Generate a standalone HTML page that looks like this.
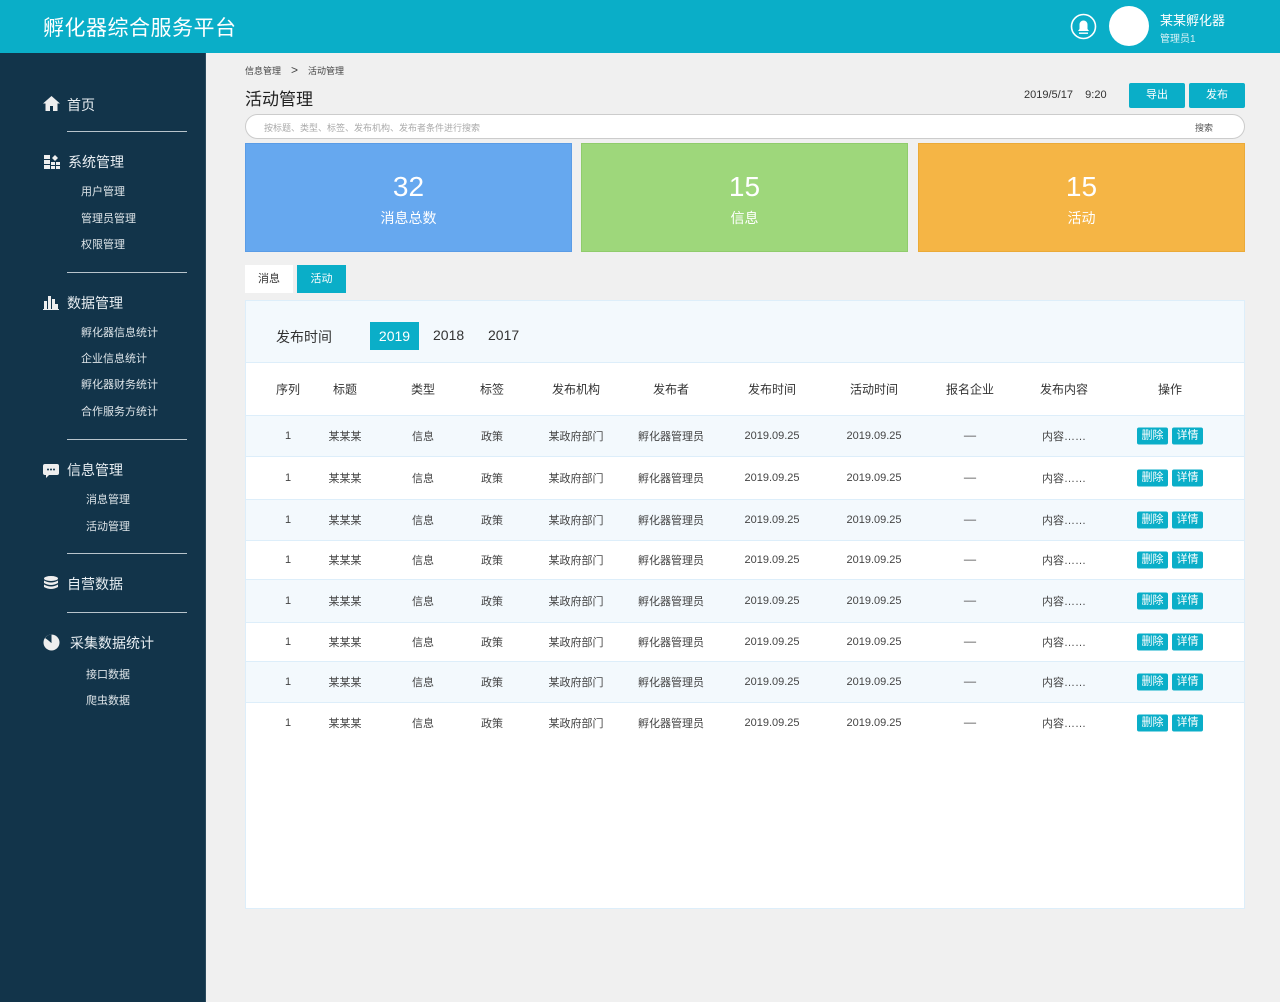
<!DOCTYPE html>
<html><head><meta charset="utf-8">
<style>
*{margin:0;padding:0;box-sizing:border-box}
body{width:1280px;height:1002px;position:relative;background:#f0f0f0;font-family:"Liberation Sans","Noto Sans CJK SC",sans-serif;overflow:hidden;color:#333}
.a{position:absolute}
#hd{left:0;top:0;width:1280px;height:53px;background:#0aaec8}
#sb{left:0;top:53px;width:206px;height:949px;background:#12344a;border-right:1px solid #2a4a5e}
.sl{position:absolute;left:67px;width:120px;height:1px;background:#b8c4cc}
.m{position:absolute;color:#e8eef2;font-size:14px}
.s{position:absolute;color:#dde4e8;font-size:11px}
.card{position:absolute;top:143px;width:327px;height:109px;color:#fff;text-align:center}
.card .n{font-size:28px;margin-top:26px;line-height:34px}
.card .t{font-size:14px;margin-top:4px}
.btn{position:absolute;background:#0aaec8;color:#fff;font-size:11px;text-align:center;border-radius:2px}
.row{position:absolute;left:246px;width:998px;border-top:1px solid #ddeefa}
.row span{position:absolute;width:120px;margin-left:-60px;text-align:center;font-size:11px;color:#444;top:50%;transform:translateY(-50%)}
.hrow span{font-size:12px;color:#333}
.row b{position:absolute;top:50%;transform:translateY(-50%);background:#0aaec8;color:#fff;font-weight:normal;font-size:11px;width:31px;height:17px;line-height:17px;text-align:center;border-radius:2px}
.alt{background:#f3f9fd}
</style></head><body>
<div id="hd" class="a">
 <div class="a" style="left:43px;top:12px;color:#fff;font-size:21px;letter-spacing:0.5px">孵化器综合服务平台</div>
 <svg class="a" style="left:1070px;top:13px" width="27" height="27" viewBox="0 0 27 27"><circle cx="13.5" cy="13.5" r="12" fill="none" stroke="#fff" stroke-width="1.6"/><path d="M8 18h11l-1.5-2v-4.5a4 4 0 0 0-8 0V16z" fill="#fff"/><rect x="9" y="19.5" width="9" height="1.4" fill="#fff"/></svg>
 <div class="a" style="left:1109px;top:6px;width:40px;height:40px;border-radius:50%;background:#fff"></div>
 <div class="a" style="left:1160px;top:10px;color:#fff;font-size:13px">某某孵化器</div>
 <div class="a" style="left:1160px;top:30px;color:#d9f2f6;font-size:10px">管理员1</div>
</div>
<div id="sb" class="a"></div>
<svg class="a" style="left:43px;top:96px" width="17" height="15" viewBox="0 0 17 15"><path d="M8.5 0L0 7.5h2.5V15h4.5v-5h3v5h4.5V7.5H17z" fill="#eee"/></svg>
<div class="m" style="left:67px;top:95px">首页</div>
<div class="sl" style="top:131px"></div>
<svg class="a" style="left:44px;top:155px" width="16" height="14" viewBox="0 0 16 14"><rect x="0" y="0" width="6" height="4" fill="#eee"/><rect x="0" y="5" width="6" height="4" fill="#eee"/><rect x="0" y="10" width="6" height="4" fill="#eee"/><path d="M11 0l3 3-3 3-3-3z" fill="#eee"/><rect x="7" y="7" width="4" height="3" fill="#eee"/><rect x="12" y="7" width="4" height="3" fill="#eee"/><rect x="7" y="11" width="4" height="3" fill="#eee"/><rect x="12" y="11" width="4" height="3" fill="#eee"/></svg>
<div class="m" style="left:68px;top:152px">系统管理</div>
<div class="s" style="left:81px;top:183px">用户管理</div>
<div class="s" style="left:81px;top:210px">管理员管理</div>
<div class="s" style="left:81px;top:236px">权限管理</div>
<div class="sl" style="top:272px"></div>
<svg class="a" style="left:43px;top:295px" width="16" height="15" viewBox="0 0 16 15"><rect x="1" y="6" width="3" height="8" fill="#eee"/><rect x="5" y="1" width="3" height="13" fill="#eee"/><rect x="9" y="4" width="3" height="10" fill="#eee"/><rect x="12" y="9" width="3" height="5" fill="#eee"/><rect x="0" y="14" width="16" height="1" fill="#eee"/></svg>
<div class="m" style="left:67px;top:293px">数据管理</div>
<div class="s" style="left:81px;top:324px">孵化器信息统计</div>
<div class="s" style="left:81px;top:350px">企业信息统计</div>
<div class="s" style="left:81px;top:376px">孵化器财务统计</div>
<div class="s" style="left:81px;top:403px">合作服务方统计</div>
<div class="sl" style="top:439px"></div>
<svg class="a" style="left:43px;top:464px" width="16" height="15" viewBox="0 0 16 15"><path d="M2 0h12a2 2 0 0 1 2 2v7a2 2 0 0 1-2 2H6l-3 3v-3H2a2 2 0 0 1-2-2V2a2 2 0 0 1 2-2z" fill="#eee"/><circle cx="5" cy="5.5" r="1" fill="#12344a"/><circle cx="8" cy="5.5" r="1" fill="#12344a"/><circle cx="11" cy="5.5" r="1" fill="#12344a"/></svg>
<div class="m" style="left:67px;top:460px">信息管理</div>
<div class="s" style="left:86px;top:491px">消息管理</div>
<div class="s" style="left:86px;top:518px">活动管理</div>
<div class="sl" style="top:553px"></div>
<svg class="a" style="left:43px;top:576px" width="16" height="15" viewBox="0 0 16 15"><ellipse cx="8" cy="2.5" rx="7" ry="2.5" fill="#eee"/><path d="M1 4.5q7 4 14 0v2.5q-7 4-14 0z" fill="#eee"/><path d="M1 8.5q7 4 14 0V11q-7 4-14 0z" fill="#eee"/></svg>
<div class="m" style="left:67px;top:574px">自营数据</div>
<div class="sl" style="top:612px"></div>
<svg class="a" style="left:43px;top:634px" width="17" height="17" viewBox="0 0 17 17"><circle cx="8.5" cy="8.5" r="8" fill="#eee"/><path d="M8.5 8.5L8.5 0.5A8 8 0 0 0 2 4z" fill="#12344a"/><path d="M8.5 8.5L3 3.5" stroke="#12344a" stroke-width="1"/></svg>
<div class="m" style="left:70px;top:633px">采集数据统计</div>
<div class="s" style="left:86px;top:666px">接口数据</div>
<div class="s" style="left:86px;top:692px">爬虫数据</div>

<div class="a" style="left:245px;top:63px;font-size:9px;color:#444">信息管理 &nbsp;&nbsp;&nbsp;<span style="font-size:12px">&gt;</span>&nbsp;&nbsp;&nbsp; 活动管理</div>
<div class="a" style="left:245px;top:85px;font-size:17px;color:#222">活动管理</div>
<div class="a" style="left:1024px;top:89px;font-size:11px;color:#333">2019/5/17 &nbsp;&nbsp;&nbsp;9:20</div>
<div class="btn" style="left:1129px;top:83px;width:56px;height:25px;line-height:25px">导出</div>
<div class="btn" style="left:1189px;top:83px;width:56px;height:25px;line-height:25px">发布</div>
<div class="a" style="left:245px;top:114px;width:1000px;height:25px;background:#fff;border:1px solid #ccc;border-radius:13px">
 <div class="a" style="left:18px;top:6px;font-size:9px;color:#aaa">按标题、类型、标签、发布机构、发布者条件进行搜索</div>
 <div class="a" style="left:949px;top:6px;font-size:9px;color:#555">搜索</div>
</div>
<div class="card" style="left:245px;background:#66a8ef;border:1px solid #5a9ce6"><div class="n">32</div><div class="t">消息总数</div></div>
<div class="card" style="left:581px;background:#9ed77b;border:1px solid #90cc6c"><div class="n">15</div><div class="t">信息</div></div>
<div class="card" style="left:918px;background:#f5b545;border:1px solid #ebaa38"><div class="n">15</div><div class="t">活动</div></div>
<div class="a" style="left:245px;top:265px;width:48px;height:28px;background:#fff;font-size:11px;text-align:center;line-height:28px;color:#333">消息</div>
<div class="a" style="left:297px;top:265px;width:49px;height:28px;background:#0aaec8;font-size:11px;text-align:center;line-height:28px;color:#fff">活动</div>

<div class="a" style="left:245px;top:300px;width:1000px;height:609px;background:#fff;border:1px solid #ddeefa"></div>
<div class="a alt" style="left:246px;top:301px;width:998px;height:61px"></div>
<div class="a" style="left:276px;top:327px;font-size:14px;color:#333">发布时间</div>
<div class="a" style="left:370px;top:322px;width:49px;height:28px;background:#0aaec8;color:#fff;font-size:14px;text-align:center;line-height:28px">2019</div>
<div class="a" style="left:433px;top:327px;font-size:14px;color:#333">2018</div>
<div class="a" style="left:488px;top:327px;font-size:14px;color:#333">2017</div>

<div class="row hrow" style="top:362px;height:53px"><span style="left:42px">序列</span><span style="left:99px">标题</span><span style="left:177px">类型</span><span style="left:246px">标签</span><span style="left:330px">发布机构</span><span style="left:425px">发布者</span><span style="left:526px">发布时间</span><span style="left:628px">活动时间</span><span style="left:724px">报名企业</span><span style="left:818px">发布内容</span><span style="left:924px">操作</span></div>

<div class="row alt" style="top:415px;height:41px"><span style="left:42px">1</span><span style="left:99px">某某某</span><span style="left:177px">信息</span><span style="left:246px">政策</span><span style="left:330px">某政府部门</span><span style="left:425px">孵化器管理员</span><span style="left:526px">2019.09.25</span><span style="left:628px">2019.09.25</span><span style="left:724px">––</span><span style="left:818px">内容……</span><b style="left:891px">删除</b><b style="left:926px">详情</b></div>
<div class="row" style="top:456px;height:43px"><span style="left:42px">1</span><span style="left:99px">某某某</span><span style="left:177px">信息</span><span style="left:246px">政策</span><span style="left:330px">某政府部门</span><span style="left:425px">孵化器管理员</span><span style="left:526px">2019.09.25</span><span style="left:628px">2019.09.25</span><span style="left:724px">––</span><span style="left:818px">内容……</span><b style="left:891px">删除</b><b style="left:926px">详情</b></div>
<div class="row alt" style="top:499px;height:41px"><span style="left:42px">1</span><span style="left:99px">某某某</span><span style="left:177px">信息</span><span style="left:246px">政策</span><span style="left:330px">某政府部门</span><span style="left:425px">孵化器管理员</span><span style="left:526px">2019.09.25</span><span style="left:628px">2019.09.25</span><span style="left:724px">––</span><span style="left:818px">内容……</span><b style="left:891px">删除</b><b style="left:926px">详情</b></div>
<div class="row" style="top:540px;height:39px"><span style="left:42px">1</span><span style="left:99px">某某某</span><span style="left:177px">信息</span><span style="left:246px">政策</span><span style="left:330px">某政府部门</span><span style="left:425px">孵化器管理员</span><span style="left:526px">2019.09.25</span><span style="left:628px">2019.09.25</span><span style="left:724px">––</span><span style="left:818px">内容……</span><b style="left:891px">删除</b><b style="left:926px">详情</b></div>
<div class="row alt" style="top:579px;height:43px"><span style="left:42px">1</span><span style="left:99px">某某某</span><span style="left:177px">信息</span><span style="left:246px">政策</span><span style="left:330px">某政府部门</span><span style="left:425px">孵化器管理员</span><span style="left:526px">2019.09.25</span><span style="left:628px">2019.09.25</span><span style="left:724px">––</span><span style="left:818px">内容……</span><b style="left:891px">删除</b><b style="left:926px">详情</b></div>
<div class="row" style="top:622px;height:39px"><span style="left:42px">1</span><span style="left:99px">某某某</span><span style="left:177px">信息</span><span style="left:246px">政策</span><span style="left:330px">某政府部门</span><span style="left:425px">孵化器管理员</span><span style="left:526px">2019.09.25</span><span style="left:628px">2019.09.25</span><span style="left:724px">––</span><span style="left:818px">内容……</span><b style="left:891px">删除</b><b style="left:926px">详情</b></div>
<div class="row alt" style="top:661px;height:41px"><span style="left:42px">1</span><span style="left:99px">某某某</span><span style="left:177px">信息</span><span style="left:246px">政策</span><span style="left:330px">某政府部门</span><span style="left:425px">孵化器管理员</span><span style="left:526px">2019.09.25</span><span style="left:628px">2019.09.25</span><span style="left:724px">––</span><span style="left:818px">内容……</span><b style="left:891px">删除</b><b style="left:926px">详情</b></div>
<div class="row" style="top:702px;height:40px"><span style="left:42px">1</span><span style="left:99px">某某某</span><span style="left:177px">信息</span><span style="left:246px">政策</span><span style="left:330px">某政府部门</span><span style="left:425px">孵化器管理员</span><span style="left:526px">2019.09.25</span><span style="left:628px">2019.09.25</span><span style="left:724px">––</span><span style="left:818px">内容……</span><b style="left:891px">删除</b><b style="left:926px">详情</b></div>
</body></html>
